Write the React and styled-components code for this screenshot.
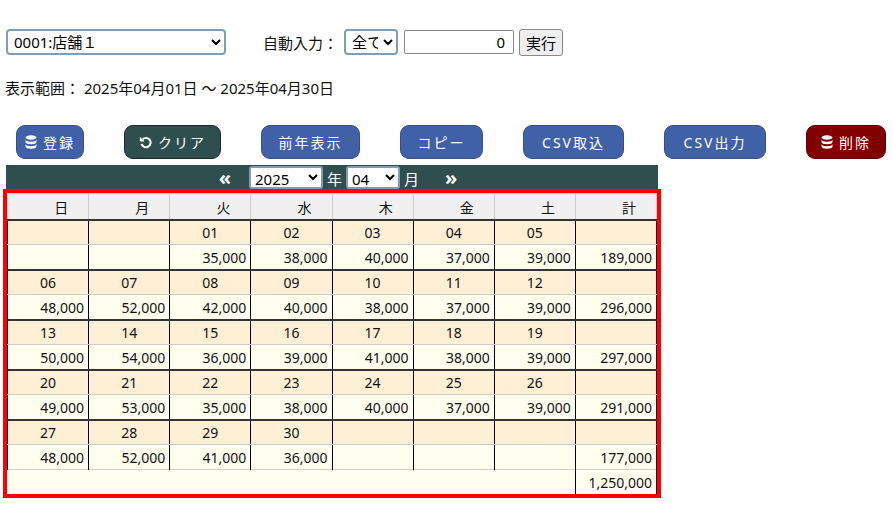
import React from 'react';
import styled, { createGlobalStyle } from 'styled-components';

const Global = createGlobalStyle`
  body { margin: 0; background: #fff; font-family: "Noto Sans", "Noto Sans CJK JP", sans-serif; font-size: 14px; color: #111; }
`;

const Page = styled.div`
  padding: 28px 6px 0 6px;
`;

const TopRow = styled.div`
  display: flex;
  align-items: center;
  height: 28px;
  font-size: 15px;
`;

const Select = styled.select`
  height: 26px;
  font: inherit;
  font-size: 15px;
  border: 2px solid #7f9db9;
  border-radius: 4px;
  background: #fff;
  padding: 0 2px;
  width: ${p => p.w}px;
`;

const Label = styled.span`
  margin: 0 6px 0 ${p => p.ml || 0}px;
`;

const NumInput = styled.input`
  width: 92px;
  height: 22px;
  margin-left: 6px;
  font: inherit;
  text-align: right;
  padding: 0 8px;
  border: 1px solid #888;
  border-radius: 2px;
`;

const PlainButton = styled.button`
  height: 27px;
  margin-left: 5px;
  font: inherit;
  background: #efefef;
  border: 1px solid #888;
  border-radius: 3px;
  padding: 0 6px;
`;

const Range = styled.div`
  margin: 21px 0 0 -1px;
  height: 20px;
  font-size: 15px;
`;

const ButtonRow = styled.div`
  display: flex;
  justify-content: space-between;
  margin: 28px 0 0 10px;
  padding-right: 1px;
`;

const ActionButton = styled.button`
  height: 34px;
  min-width: ${p => p.w}px;
  border-radius: 9px;
  border: 1px solid ${p => (p.kind === 'del' ? '#5a0000' : p.kind === 'dark' ? '#223' : '#3a4f8a')};
  background: ${p => (p.kind === 'del' ? '#800000' : p.kind === 'dark' ? '#2f4f4f' : '#4060a8')};
  color: #fff;
  font: inherit;
  font-size: 14px;
  letter-spacing: 2px;
  display: flex;
  align-items: center;
  justify-content: center;
  gap: 6px;
`;

const NavBar = styled.div`
  width: 652px;
  height: 24px;
  margin-top: 6px;
  background: #2f4f4f;
  color: #fff;
  font-size: 15px;
  display: flex;
  align-items: flex-end;
  justify-content: center;
  gap: 4px;
  padding-left: 20px;
  box-sizing: border-box;
`;

const Arrow = styled.span`
  font-size: 20px;
  font-weight: bold;
  margin: 0 ${p => p.m}px;
  line-height: 22px;
`;

const NavSelect = styled.select`
  height: 23px;
  width: ${p => p.w}px;
  font: inherit;
  font-size: 15px;
  border: 2px solid #7f9db9;
  border-radius: 3px;
  background: #fff;
`;

const Frame = styled.div`
  width: 650px;
  margin-left: -3px;
  border: 4px solid #f00;
`;

const Table = styled.table`
  width: 650px;
  border-collapse: collapse;
  table-layout: fixed;
  background: #fffff0;
`;

const Th = styled.th`
  height: 25px;
  padding: 0 20px 0 0;
  background: #f0f0f0;
  border: 1px solid #ccc;
  font-weight: normal;
  text-align: right;
`;

const DateCell = styled.td`
  height: 23px;
  padding: 0 0 0 32px;
  background: #ffefd5;
  border-left: 1px solid #000;
  border-right: 1px solid #000;
  border-top: 2px solid #333;
  border-bottom: 1px solid #ccc;
`;

const ValCell = styled.td`
  height: 24px;
  padding: 0 4px 0 0;
  border-left: 1px solid #000;
  border-right: 1px solid #000;
  border-top: ${p => (p.sep ? '1px solid #ccc' : 'none')};
  text-align: right;
`;

const TotalBlank = styled.td`
  border-top: 1px solid #ccc;
  height: 24px;
  padding: 0;
`;

const Stack = () => (
  <svg width="12" height="14" viewBox="0 0 12 14" fill="#fff">
    <ellipse cx="6" cy="2.5" rx="5.5" ry="2.2" />
    <path d="M0.5 4.5c0 1.3 2.5 2.3 5.5 2.3s5.5-1 5.5-2.3v2.5c0 1.3-2.5 2.3-5.5 2.3S0.5 8.3 0.5 7z" />
    <path d="M0.5 9c0 1.3 2.5 2.3 5.5 2.3s5.5-1 5.5-2.3v2.4c0 1.3-2.5 2.3-5.5 2.3S0.5 12.7 0.5 11.4z" />
  </svg>
);

const Undo = () => (
  <svg width="13" height="13" viewBox="0 0 14 14" fill="none" stroke="#fff" strokeWidth="2.2">
    <path d="M4 3.5a5 5 0 1 1-1.3 5" />
    <path d="M1.5 1.5v4h4" fill="#fff" strokeWidth="1" />
  </svg>
);

const weeks = [
  { d: ['', '', '01', '02', '03', '04', '05'], v: ['', '', '35,000', '38,000', '40,000', '37,000', '39,000'], t: '189,000' },
  { d: ['06', '07', '08', '09', '10', '11', '12'], v: ['48,000', '52,000', '42,000', '40,000', '38,000', '37,000', '39,000'], t: '296,000' },
  { d: ['13', '14', '15', '16', '17', '18', '19'], v: ['50,000', '54,000', '36,000', '39,000', '41,000', '38,000', '39,000'], t: '297,000' },
  { d: ['20', '21', '22', '23', '24', '25', '26'], v: ['49,000', '53,000', '35,000', '38,000', '40,000', '37,000', '39,000'], t: '291,000' },
  { d: ['27', '28', '29', '30', '', '', ''], v: ['48,000', '52,000', '41,000', '36,000', '', '', ''], t: '177,000' },
];

const heads = ['日', '月', '火', '水', '木', '金', '土', '計'];

export default function App() {
  return (
    <Page>
      <Global />
      <TopRow>
        <Select w={220}><option>0001:店舗１</option></Select>
        <Label ml={37}>自動入力：</Label>
        <Select w={54}><option>全て</option></Select>
        <NumInput defaultValue="0" />
        <PlainButton>実行</PlainButton>
      </TopRow>
      <Range>表示範囲： 2025年04月01日 ～ 2025年04月30日</Range>
      <ButtonRow>
        <ActionButton w={68}><Stack />登録</ActionButton>
        <ActionButton w={97} kind="dark"><Undo />クリア</ActionButton>
        <ActionButton w={99}>前年表示</ActionButton>
        <ActionButton w={83}>コピー</ActionButton>
        <ActionButton w={101}>CSV取込</ActionButton>
        <ActionButton w={102}>CSV出力</ActionButton>
        <ActionButton w={80} kind="del"><Stack />削除</ActionButton>
      </ButtonRow>
      <NavBar>
        <Arrow m={14}>«</Arrow>
        <NavSelect w={74}><option>2025</option></NavSelect>
        <span>年</span>
        <NavSelect w={54}><option>04</option></NavSelect>
        <span>月</span>
        <Arrow m={22}>»</Arrow>
      </NavBar>
      <Frame>
        <Table>
          <thead>
            <tr>{heads.map(h => <Th key={h}>{h}</Th>)}</tr>
          </thead>
          <tbody>
            {weeks.map((w, i) => (
              <React.Fragment key={i}>
                <tr>
                  {w.d.map((d, j) => <DateCell key={j}>{d}</DateCell>)}
                  <DateCell />
                </tr>
                <tr>
                  {w.v.map((v, j) => <ValCell key={j}>{v}</ValCell>)}
                  <ValCell>{w.t}</ValCell>
                </tr>
              </React.Fragment>
            ))}
            <tr>
              <TotalBlank colSpan={7} />
              <ValCell sep>1,250,000</ValCell>
            </tr>
          </tbody>
        </Table>
      </Frame>
    </Page>
  );
}
